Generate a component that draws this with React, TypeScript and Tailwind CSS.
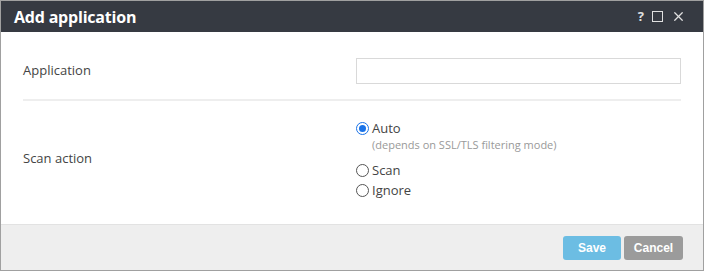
import { X } from "lucide-react";

function Radio({ checked }: { checked?: boolean }) {
  return (
    <span
      className={
        "flex h-[13px] w-[13px] shrink-0 items-center justify-center rounded-full border " +
        (checked ? "border-[#1a73e8]" : "border-[#555]")
      }
    >
      {checked && <span className="h-[7px] w-[7px] rounded-full bg-[#1a73e8]" />}
    </span>
  );
}

export default function App() {
  return (
    <div
      className="flex h-[271px] w-[704px] flex-col border border-[#a0a0a0] bg-white text-[13px] text-[#444]"
      style={{ fontFamily: '"Open Sans", "Noto Sans", sans-serif' }}
    >
      <div className="flex h-[31px] shrink-0 items-center justify-between bg-[#363a42] pl-[13px] pr-[17px] text-white">
        <span className="text-[16px] font-bold tracking-[-0.2px]">Add application</span>
        <div className="flex items-center gap-[8px] text-[#e0e0e0]">
          <span className="text-[13px] font-bold">?</span>
          <span className="h-[11px] w-[11px] border-[1.5px] border-[#e0e0e0]" />
          <X className="h-[15px] w-[15px]" strokeWidth={2} />
        </div>
      </div>

      <div className="flex-1 px-[22px]">
        <div className="flex h-[69px] items-center border-b-2 border-[#eeeeee] pt-[10px]">
          <span className="w-[333px]">Application</span>
          <input className="h-[26px] flex-1 border border-[#d9d9d9] bg-white outline-none" />
        </div>
        <div className="flex items-center pt-[18px] pb-[19px]">
          <span className="w-[333px] pb-[2px]">Scan action</span>
          <div className="flex flex-col">
            <label className="flex items-center gap-[3px] leading-[18px]">
              <Radio checked />
              <span>Auto</span>
            </label>
            <span className="ml-[16px] mb-[7px] text-[11px] leading-[16px] text-[#999]">
              (depends on SSL/TLS filtering mode)
            </span>
            <label className="flex items-center gap-[3px] leading-[20px]">
              <Radio />
              <span>Scan</span>
            </label>
            <label className="flex items-center gap-[3px] leading-[20px]">
              <Radio />
              <span>Ignore</span>
            </label>
          </div>
        </div>
      </div>

      <div
        className="flex h-[46px] shrink-0 items-center justify-end gap-[3px] border-t border-[#e2e2e2] bg-[#eeeeee] pr-[20px]"
        style={{ fontFamily: '"Liberation Sans", Arial, sans-serif' }}
      >
        <button className="h-[24px] w-[58px] rounded-[3px] bg-[#6cbde3] text-[12px] font-bold text-white">
          Save
        </button>
        <button className="h-[24px] w-[59px] rounded-[3px] bg-[#9b9b9b] text-[12px] font-bold text-white">
          Cancel
        </button>
      </div>
    </div>
  );
}
